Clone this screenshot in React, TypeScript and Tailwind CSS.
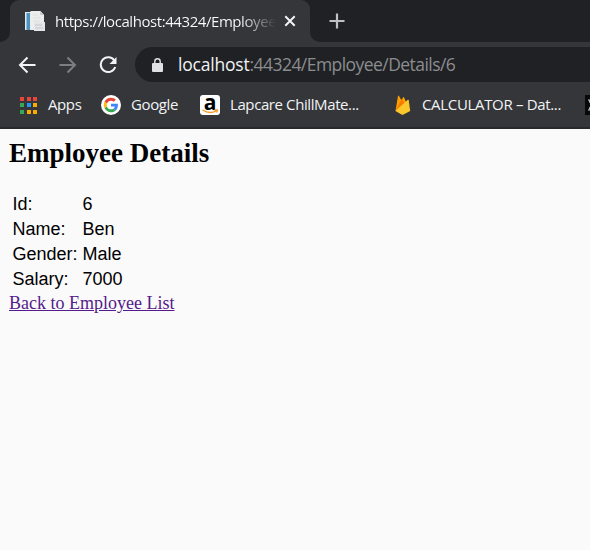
import React from "react";

const ui = "font-['Open_Sans','Noto_Sans',sans-serif]";

function PageIcon() {
  return (
    <svg width="20" height="21" viewBox="0 0 20 21" className="shrink-0">
      <path d="M0 1h12v18H0z" fill="#dfe8ec" />
      <path d="M1.500 2h3.500v17H1.500z" fill="#4c94bf" />
      <path d="M5.500 0h10l3.500 4v15H5.500z" fill="#eceded" />
      <path d="M15 0v4h4z" fill="#c9cdd0" />
      <path d="M8 4h5M8 7h8M8 10h7" stroke="#dcdfe1" strokeWidth="1" />
      <path d="M9 11h11v9H9z" fill="#e3e5e7" />
      <path d="M10 14h7M10 17h8" stroke="#c5c9cc" strokeWidth="1" />
    </svg>
  );
}

function AppsIcon() {
  const colors = ["#e8453c", "#e8453c", "#e8453c", "#34a853", "#2196f3", "#f9ab00", "#34a853", "#f9ab00", "#f9ab00"];
  return (
    <div className="grid shrink-0 grid-cols-3 gap-x-[2.5px] gap-y-[2.5px]">
      {colors.map((c, i) => (
        <svg key={i} width="4" height="4" viewBox="0 0 4 4">
          <rect width="4" height="4" fill={c} />
        </svg>
      ))}
    </div>
  );
}

function GoogleIcon() {
  return (
    <svg width="20" height="20" viewBox="0 0 20 20" className="shrink-0">
      <circle cx="10" cy="10" r="10" fill="#fff" />
      <g transform="translate(2.8 2.8) scale(.3)">
        <path fill="#ea4335" d="M24 9.5c3.5 0 6.7 1.2 9.2 3.6l6.9-6.9C35.9 2.4 30.5 0 24 0 14.6 0 6.5 5.4 2.6 13.2l8 6.2C12.4 13.7 17.7 9.5 24 9.5z" />
        <path fill="#4285f4" d="M47 24.6c0-1.6-.2-3.1-.4-4.6H24v9h12.9c-.6 3-2.2 5.500-4.700 7.200l7.700 6C44.400 38 47 31.800 47 24.600z" />
        <path fill="#fbbc05" d="M10.500 28.600c-.5-1.500-.8-3-.8-4.600s.3-3.100.8-4.600l-7.900-6.200C.9 16.500 0 20.100 0 24s.9 7.500 2.600 10.800z" />
        <path fill="#34a853" d="M24 48c6.500 0 11.900-2.100 15.900-5.800l-7.700-6c-2.200 1.400-4.900 2.300-8.200 2.300-6.300 0-11.600-4.200-13.500-9.900l-7.900 6.200C6.500 42.600 14.600 48 24 48z" />
      </g>
    </svg>
  );
}

function AmazonIcon() {
  return (
    <div className="grid size-5 shrink-0 grid-cols-1 grid-rows-1 rounded-[3px] bg-white">
      <span className="col-start-1 row-start-1 -mt-[3px] text-center font-['Open_Sans',sans-serif] text-[21px] leading-[20px] font-bold text-black">a</span>
      <svg width="20" height="20" viewBox="0 0 20 20" className="col-start-1 row-start-1">
        <path d="M2.500 15q7 4.500 13.500 1M14.500 15h3l-1 2.500" fill="none" stroke="#f49b22" strokeWidth="1.300" />
      </svg>
    </div>
  );
}

function FirebaseIcon() {
  return (
    <svg width="16" height="20" viewBox="0 0 16 20" className="shrink-0">
      <path d="M.5 16 3 1q.4-1 1 0l2.500 4.500L8 2.500q.6-.9 1.100 0L14 14z" fill="#ffa000" />
      <path d="M.5 16 9.500 8 6.500 4z" fill="#f57c00" />
      <path d="m.5 16 12-11q1-.7 1.200.3l1.500 10.700-6.700 3.500q-1 .5-2 0z" fill="#fcc92c" />
    </svg>
  );
}

function TabStrip() {
  return (
    <div className="flex h-[42px] bg-[#202124]">
      <div className="flex w-[10px] items-end bg-[#35363a]">
        <div className="h-[42px] w-full rounded-br-[10px] bg-[#202124]" />
      </div>
      <div className="flex h-full w-[300px] items-center rounded-t-[9px] bg-[#35363a] pl-[15px]">
        <PageIcon />
        <div className={`${ui} ml-[10px] w-[221px] bg-gradient-to-r from-white from-[84%] to-transparent bg-clip-text text-[15px] tracking-[-0.43px] leading-[22px] whitespace-nowrap text-transparent`}>
          https://localhost:44324/Employee
        </div>
        <svg width="12" height="12" viewBox="0 0 12 12" className="ml-[8px] shrink-0">
          <path d="m1.300 1.300 9.400 9.400m0-9.400-9.400 9.400" stroke="#f1f3f4" strokeWidth="2" />
        </svg>
      </div>
      <div className="w-[10px] bg-[#35363a]">
        <div className="h-full w-full rounded-bl-[10px] bg-[#202124]" />
      </div>
      <svg width="16" height="16" viewBox="0 0 16 16" className="mt-[13px] ml-[9px]">
        <path d="M8 .5v15M.5 8h15" stroke="#bdc1c6" strokeWidth="2.200" />
      </svg>
    </div>
  );
}

function Toolbar() {
  return (
    <div className="flex h-[45px] items-center">
      <svg width="18" height="18" viewBox="0 0 18 18" className="ml-[18px] shrink-0">
        <path d="M17.500 9H2M9.500 1.500 2 9l7.500 7.500" fill="none" stroke="#f1f3f4" strokeWidth="2" />
      </svg>
      <svg width="18" height="18" viewBox="0 0 18 18" className="ml-[23px] shrink-0">
        <path d="M.5 9H16M8.500 1.500 16 9l-7.500 7.500" fill="none" stroke="#7d7e81" strokeWidth="2" />
      </svg>
      <svg width="18" height="18" viewBox="0 0 18 18" className="ml-[22px] shrink-0">
        <path d="M15.600 5A7.400 7.400 0 1 0 16.200 11" fill="none" stroke="#f1f3f4" strokeWidth="2" />
        <path d="M17.500 1v7h-7z" fill="#f1f3f4" />
      </svg>
      <div className="ml-[18px] flex h-[35px] flex-1 items-center rounded-l-full bg-[#202124] pl-[17px]">
        <svg width="11" height="14" viewBox="0 0 11 14" className="shrink-0">
          <path d="M2.800 6V3.500a2.700 2.700 0 0 1 5.400 0V6" fill="none" stroke="#dfe1e4" strokeWidth="1.400" />
          <rect y="5" width="11" height="9" rx="1" fill="#dfe1e4" />
        </svg>
        <span className={`${ui} -mt-px ml-[15px] text-[17.500px] tracking-[-0.55px] leading-6 whitespace-nowrap text-[#8b8d90]`}>
          <span className="tracking-[-0.2px] text-[#f1f3f4]">localhost</span>:44324/Employee/Details/6
        </span>
      </div>
    </div>
  );
}

function Bookmarks() {
  return (
    <div className={`${ui} flex h-[40px] items-center overflow-hidden pb-[4px] pl-[20px] text-[15px] leading-[22px] whitespace-nowrap text-[#f1f3f4]`}>
      <div className="flex w-[81px] items-center gap-[11px]"><AppsIcon /><span className="-mt-[3px] tracking-[-0.4px]">Apps</span></div>
      <div className="flex w-[99px] items-center gap-[10px]"><GoogleIcon /><span className="-mt-[3px] tracking-[-0.4px]">Google</span></div>
      <div className="flex w-[195px] items-center gap-[10px]"><AmazonIcon /><span className="-mt-[3px] tracking-[-0.4px]">Lapcare ChillMate...</span></div>
      <div className="flex w-[190px] items-center gap-[11px]"><FirebaseIcon /><span className="-mt-[3px] tracking-[-0.33px]">CALCULATOR – Dat...</span></div>
      <svg width="5" height="20" viewBox="0 0 5 20" className="shrink-0">
        <path d="M0 0h5v20H0z" fill="#08090a" /><path d="M3 5h2M3 15h2M4 5l1 3M4 15l1-3" stroke="#c5c5c5" />
      </svg>
    </div>
  );
}

export default function App() {
  const rows = [["Id:", "6"], ["Name:", "Ben"], ["Gender:", "Male"], ["Salary:", "7000"]];
  return (
    <div className="h-[550px] w-[590px] overflow-hidden bg-[#fafafa]">
      <div className="h-[129px] border-b-2 border-[#28292c] bg-[#35363a]">
        <TabStrip />
        <Toolbar />
        <Bookmarks />
      </div>
      <main className="px-[9px] pt-[8px] text-black">
        <h1 className="font-['Liberation_Serif',serif] text-[27px] leading-[33px] font-bold whitespace-nowrap">Employee Details</h1>
        <table className="mt-[22px] ml-[3.5px] border-collapse font-['Liberation_Sans',sans-serif] text-[18px] leading-[25px]">
          <tbody>
            {rows.map(([label, value]) => (
              <tr key={label}><td className="w-[70px] p-0">{label}</td><td className="p-0">{value}</td></tr>
            ))}
          </tbody>
        </table>
        <a href="#" className="block w-fit font-['Liberation_Serif',serif] text-[18px] leading-[23px] whitespace-nowrap text-[#551a8b] underline">Back to Employee List</a>
      </main>
    </div>
  );
}
